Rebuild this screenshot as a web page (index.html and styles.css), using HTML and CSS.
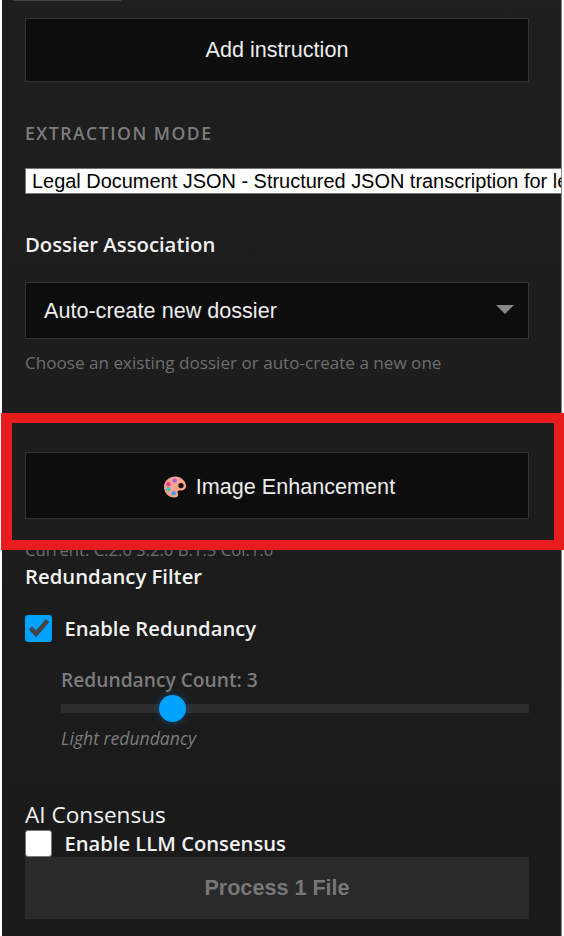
FILE: index.html
```html
<!DOCTYPE html>
<html lang="en">
<head>
<meta charset="utf-8">
<title>Upload settings</title>
<link rel="stylesheet" href="styles.css">
</head>
<body>
<main class="panel">
  <div class="stub"></div>
  <button class="btn btn-add" type="button">Add instruction</button>
  <h3 class="eyebrow">EXTRACTION MODE</h3>
  <select class="mode-select">
    <option>Legal Document JSON - Structured JSON transcription for legal documents and court filings</option>
  </select>
  <h3 class="section-title dossier-title">Dossier Association</h3>
  <div class="select-wrap">
    <select class="dark-select"><option>Auto-create new dossier</option></select>
    <span class="caret"></span>
  </div>
  <p class="hint">Choose an existing dossier or auto-create a new one</p>
  <button class="btn btn-enhance" type="button">
    <svg class="palette" viewBox="0 0 24 24" width="24" height="24" aria-hidden="true">
      <path fill="#f7a58f" d="M12.500 1.500C6.300 1.500 1 6 1 12c0 5.800 4.600 10.500 10.300 10.500 2.500 0 3.900-1 3.900-2.700 0-1.700-1.300-2.300-.6-3.500.8-1.300 2.600-.4 4.600-.8 2.700-.5 3.800-2.200 3.800-4.400 0-5-4.900-9.600-10.500-9.600z"/>
      <circle cx="18" cy="10.600" r="2.700" fill="#14100f"/>
      <circle cx="11.600" cy="5.600" r="2.200" fill="#b45ee0"/>
      <circle cx="5.400" cy="9.300" r="2.200" fill="#e8388f"/>
      <circle cx="5.400" cy="14.300" r="2.200" fill="#3cc0c0"/>
      <circle cx="10.600" cy="18.200" r="2.200" fill="#4a9be8"/>
    </svg>
    <span>Image Enhancement</span>
  </button>
  <p class="current">Current: C:2.0 S:2.0 B:1.5 Col:1.0</p>
  <h3 class="section-title redundancy-title">Redundancy Filter</h3>
  <label class="check-row checked-row">
    <span class="box box-on">
      <svg viewBox="0 0 27 27" width="27" height="27" aria-hidden="true"><path d="M5.500 13l5.500 6L22.500 5.500" fill="none" stroke="#444" stroke-width="4.500"/></svg>
    </span>
    <span>Enable Redundancy</span>
  </label>
  <div class="sub">
    <div class="count">Redundancy Count: 3</div>
    <div class="track"><span class="thumb"></span></div>
    <div class="note">Light redundancy</div>
  </div>
  <h3 class="ai-title">AI Consensus</h3>
  <label class="check-row llm-row">
    <span class="box box-off"></span>
    <span>Enable LLM Consensus</span>
  </label>
  <button class="process" type="button">Process 1 File</button>
</main>
<div class="highlight"></div>
</body>
</html>
```
FILE: styles.css
```css
* { box-sizing: border-box; }
html, body { margin: 0; padding: 0; background: #fff; height: 936px; overflow: hidden; }
body { position: relative; }
.panel {
  margin-left: 2px;
  width: 559.500px;
  height: 936px;
  padding: 0 32px 0 23px;
  background: linear-gradient(#1f1f1f, #1a1a1a);
  border-right: 1px solid #888;
  overflow: hidden;
  font-family: "Open Sans", "Noto Sans", sans-serif;
  color: #f2f2f2;
}
.stub { height: 1px; width: 108px; margin-left: -12px; border: 1px solid #444; border-top: 0; }
.btn {
  display: flex;
  align-items: center;
  justify-content: center;
  width: 504px;
  background: #0d0d0d;
  border: 1px solid #333;
  color: #eee;
  font: 21.600px "Liberation Sans", Arial, sans-serif;
  padding: 0;
}
.btn-add { height: 64px; margin-top: 17px; }
.eyebrow {
  margin: 41px 0 0;
  font-size: 17.600px;
  line-height: 21px;
  font-weight: 600;
  letter-spacing: 1.500px;
  color: #7c7c7c;
}
.mode-select {
  display: block;
  appearance: none;
  margin: 24px 0 0;
  height: 26px;
  padding: 0 6px;
  background: #fff;
  border: 1px solid #767676;
  border-radius: 0;
  color: #000;
  font: 19.950px "Liberation Sans", Arial, sans-serif;
}
.section-title {
  margin: 0;
  font-size: 20.300px;
  line-height: 26px;
  font-weight: 600;
  color: #f2f2f2;
}
.dossier-title { margin-top: 37px; }
.select-wrap { position: relative; width: 504px; margin-top: 25px; }
.dark-select {
  display: block;
  appearance: none;
  width: 100%;
  height: 57px;
  padding: 0 18px;
  background: #0d0d0d;
  border: 1px solid #333;
  border-radius: 0;
  color: #eee;
  font: 21.600px "Liberation Sans", Arial, sans-serif;
}
.caret {
  position: absolute;
  right: 15px;
  top: 23px;
  border-left: 9px solid transparent;
  border-right: 9px solid transparent;
  border-top: 9px solid #888;
}
.hint { margin: 13px 0 0; font-size: 17.100px; line-height: 22px; color: #6e6e6e; }
.btn-enhance { height: 67px; margin-top: 78px; gap: 9px; padding: 3px 0 0 4px; }
.palette { display: block; flex: none; }
.current { margin: 21px 0 0; font-size: 16.700px; line-height: 20px; color: #6e6e6e; }
.redundancy-title { margin-top: 3px; }
.check-row { display: flex; align-items: center; gap: 12.500px; font-size: 20.200px; line-height: 27px; font-weight: 600; color: #f2f2f2; }
.checked-row { margin-top: 26px; }
.box { display: block; flex: none; width: 27px; height: 27px; border-radius: 3px; }
.box svg { display: block; }
.box-on { background: #00a2ff; }
.box-off { background: #fff; border: 1px solid #777; }
.sub { margin: 26px 0 0 36px; }
.count { font-size: 19.200px; line-height: 24px; font-weight: 600; color: #7c7c7c; }
.track { position: relative; height: 9px; margin-top: 12px; background: #2d2d2d; }
.thumb {
  position: absolute;
  left: 98px;
  top: -9px;
  width: 27px;
  height: 27px;
  border-radius: 50%;
  background: #00a2ff;
  box-shadow: 0 0 8px rgba(0, 162, 255, 0.35);
}
.note { margin-top: 14px; font-size: 17.600px; line-height: 22px; font-style: italic; color: #7c7c7c; }
.ai-title { margin: 51px 0 1px; font-size: 22.600px; line-height: 29px; font-weight: 400; color: #f2f2f2; }
.llm-row { margin-top: 0; height: 27px; }
.process {
  display: block;
  width: 504px;
  height: 62px;
  margin-top: 0;
  padding: 0;
  background: #2a2a2a;
  border: 0;
  color: #777;
  font: bold 21.600px "Liberation Sans", Arial, sans-serif;
}
.highlight {
  position: absolute;
  left: 1px;
  top: 413px;
  width: 563px;
  height: 137px;
  border: 10px solid #e81c1c;
  border-left-width: 11px;
}
```
